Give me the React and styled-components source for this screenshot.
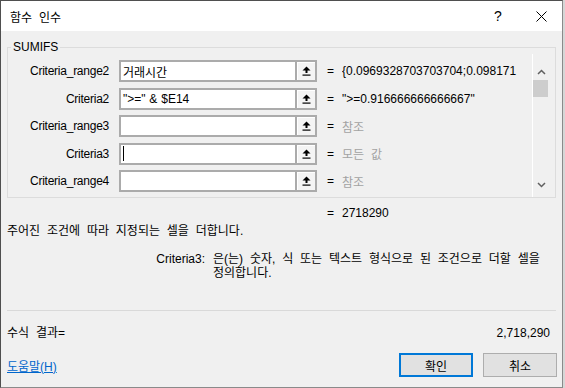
import React from "react";
import styled, { createGlobalStyle } from "styled-components";

const GlobalStyle = createGlobalStyle`
  html, body { margin: 0; padding: 0; }
  body {
    background: #d6d6d6;
    font-family: "Liberation Sans", "Noto Sans CJK KR", sans-serif;
    font-size: 12px;
    word-spacing: 3.5px;
    color: #000;
  }
`;

const Window = styled.div`
  box-sizing: border-box;
  width: 563px;
  height: 388px;
  border: 1px solid #4f4f4f;
  border-right-color: #8a8a8a;
  border-bottom-color: #8a8a8a;
  background: #f0f0f0;
  display: flex;
  flex-direction: column;
`;

const TitleBar = styled.div`
  flex: none;
  height: 30px;
  background: #fff;
  display: flex;
  align-items: center;
`;

const Title = styled.div`
  flex: 1;
  padding-left: 9px;
  font-size: 12px;
`;

const CaptionButton = styled.div`
  width: ${(p) => p.$w}px;
  height: 30px;
  display: flex;
  align-items: center;
  justify-content: center;
  font-size: 14px;
`;

const Content = styled.div`
  flex: 1;
  display: flex;
  flex-direction: column;
  padding: 0 6px;
`;

const Group = styled.fieldset`
  margin: 9px 0 0;
  padding: 0 6px 0 0;
  border: 1px solid #dcdcdc;
  display: flex;
  min-width: 0;
`;

const Legend = styled.legend`
  margin-left: 3px;
  padding: 0 2px;
  line-height: 14px;
  font-size: 12px;
`;

const Rows = styled.div`
  flex: 1;
  min-width: 0;
  display: flex;
  flex-direction: column;
  gap: 5.5px;
  padding: 6px 0 5px;
`;

const Row = styled.div`
  display: flex;
  align-items: center;
  height: 22px;
`;

const Label = styled.div`
  width: 101px;
  margin-right: 10px;
  text-align: right;
  white-space: nowrap;
  letter-spacing: -0.25px;
`;

const InputBox = styled.div`
  box-sizing: border-box;
  width: 176px;
  height: 22px;
  border: 2px solid #ababab;
  border-right: none;
  background: #fff;
  padding: 0 2px;
  display: flex;
  align-items: center;
  white-space: pre;
  word-spacing: 0.5px;
  font-size: 12px;
`;

const Caret = styled.span`
  display: inline-block;
  width: 1px;
  height: 15px;
  background: #000;
`;

const RefButton = styled.div`
  box-sizing: border-box;
  width: 22px;
  height: 22px;
  border: 2px solid #ababab;
  background: #f4f4f4;
  box-shadow: inset 1px 1px 0 #fff;
  display: flex;
  align-items: center;
  justify-content: center;
`;

const Eq = styled.div`
  width: 7px;
  margin-left: ${(p) => p.$ml ?? 10}px;
  text-align: center;
`;

const Value = styled.div`
  margin-left: 8px;
  flex: 1;
  min-width: 0;
  overflow: hidden;
  white-space: nowrap;
  color: ${(p) => (p.$muted ? "#a2a2a2" : "#000")};
`;

const Scrollbar = styled.div`
  flex: none;
  width: 17px;
  box-sizing: border-box;
  border-left: 1px solid #fff;
  display: flex;
  flex-direction: column;
  padding: 9px 0 4px;
`;

const ArrowBox = styled.div`
  height: 17px;
  display: flex;
  align-items: center;
  justify-content: center;
`;

const Thumb = styled.div`
  width: 15px;
  height: 17px;
  background: #cdcdcd;
`;

const Spacer = styled.div`
  flex: 1;
`;

const ResultRow = styled.div`
  display: flex;
  align-items: center;
  height: 16px;
  margin-top: 7px;
  padding-left: 320px;
`;

const Description = styled.div`
  margin-top: 2px;
  line-height: 16px;
`;

const ArgHelp = styled.div`
  display: flex;
  margin-top: 13px;
  line-height: 14px;
`;

const ArgName = styled.div`
  width: 198px;
  text-align: right;
  flex: none;
`;

const ArgText = styled.div`
  margin-left: 8px;
  width: 335px;
  word-break: keep-all;
`;

const Separator = styled.div`
  height: 1px;
  background: #d9d9d9;
  margin-top: 30px;
`;

const FormulaResult = styled.div`
  display: flex;
  justify-content: space-between;
  line-height: 16px;
  margin-top: 14px;
  padding-right: 6px;
`;

const Footer = styled.div`
  display: flex;
  align-items: center;
  margin-top: 12px;
  gap: 10px;
  margin-right: -1px;
`;

const HelpLink = styled.a`
  flex: 1;
  color: #0066cc;
  text-decoration: underline;
  cursor: pointer;
`;

const DialogButton = styled.div`
  box-sizing: border-box;
  width: 74px;
  height: 24px;
  background: #e1e1e1;
  border: ${(p) => (p.$default ? "2px solid #0078d7" : "1px solid #adadad")};
  display: flex;
  align-items: center;
  justify-content: center;
`;

const RefIcon = () => (
  <svg width="9" height="10" viewBox="0 0 9 10">
    <path d="M4.5 0.5 L8.5 4.5 L5.5 4.5 L5.5 7 L3.5 7 L3.5 4.5 L0.5 4.5 Z" fill="#000" />
    <rect x="0.5" y="8.5" width="8" height="1.2" fill="#000" />
  </svg>
);

const Chevron = ({ down }) => (
  <svg width="9" height="6" viewBox="0 0 9 6">
    <path
      d={down ? "M1 1 L4.5 4.5 L8 1" : "M1 5 L4.5 1.5 L8 5"}
      fill="none"
      stroke="#606060"
      strokeWidth="1.5"
    />
  </svg>
);

const CloseIcon = () => (
  <svg width="11" height="11" viewBox="0 0 11 11">
    <path d="M0.5 0.5 L10.5 10.5 M10.5 0.5 L0.5 10.5" stroke="#000" strokeWidth="1" />
  </svg>
);

const rows = [
  { label: "Criteria_range2", input: "거래시간", value: "{0.0969328703703704;0.098171" },
  { label: "Criteria2", input: "\">=\" & $E14", value: "\">=0.916666666666667\"" },
  { label: "Criteria_range3", input: "", value: "참조", muted: true },
  { label: "Criteria3", input: "", caret: true, value: "모든 값", muted: true },
  { label: "Criteria_range4", input: "", value: "참조", muted: true },
];

export default function App() {
  return (
    <>
      <GlobalStyle />
      <Window>
        <TitleBar>
          <Title>함수 인수</Title>
          <CaptionButton $w={44}>?</CaptionButton>
          <CaptionButton $w={42}>
            <CloseIcon />
          </CaptionButton>
        </TitleBar>
        <Content>
          <Group>
            <Legend>SUMIFS</Legend>
            <Rows>
              {rows.map((r) => (
                <Row key={r.label}>
                  <Label>{r.label}</Label>
                  <InputBox>
                    {r.caret ? <Caret /> : r.input}
                  </InputBox>
                  <RefButton>
                    <RefIcon />
                  </RefButton>
                  <Eq>=</Eq>
                  <Value $muted={r.muted}>{r.value}</Value>
                </Row>
              ))}
            </Rows>
            <Scrollbar>
              <ArrowBox>
                <Chevron />
              </ArrowBox>
              <Thumb />
              <Spacer />
              <ArrowBox>
                <Chevron down />
              </ArrowBox>
            </Scrollbar>
          </Group>
          <ResultRow>
            <Eq $ml={0}>=</Eq>
            <Value>2718290</Value>
          </ResultRow>
          <Description>주어진 조건에 따라 지정되는 셀을 더합니다.</Description>
          <ArgHelp>
            <ArgName>Criteria3:</ArgName>
            <ArgText>은(는) 숫자, 식 또는 텍스트 형식으로 된 조건으로 더할 셀을 정의합니다.</ArgText>
          </ArgHelp>
          <Separator />
          <FormulaResult>
            <span>수식 결과=</span>
            <span>2,718,290</span>
          </FormulaResult>
          <Footer>
            <HelpLink>도움말(H)</HelpLink>
            <DialogButton $default>확인</DialogButton>
            <DialogButton>취소</DialogButton>
          </Footer>
        </Content>
      </Window>
    </>
  );
}
